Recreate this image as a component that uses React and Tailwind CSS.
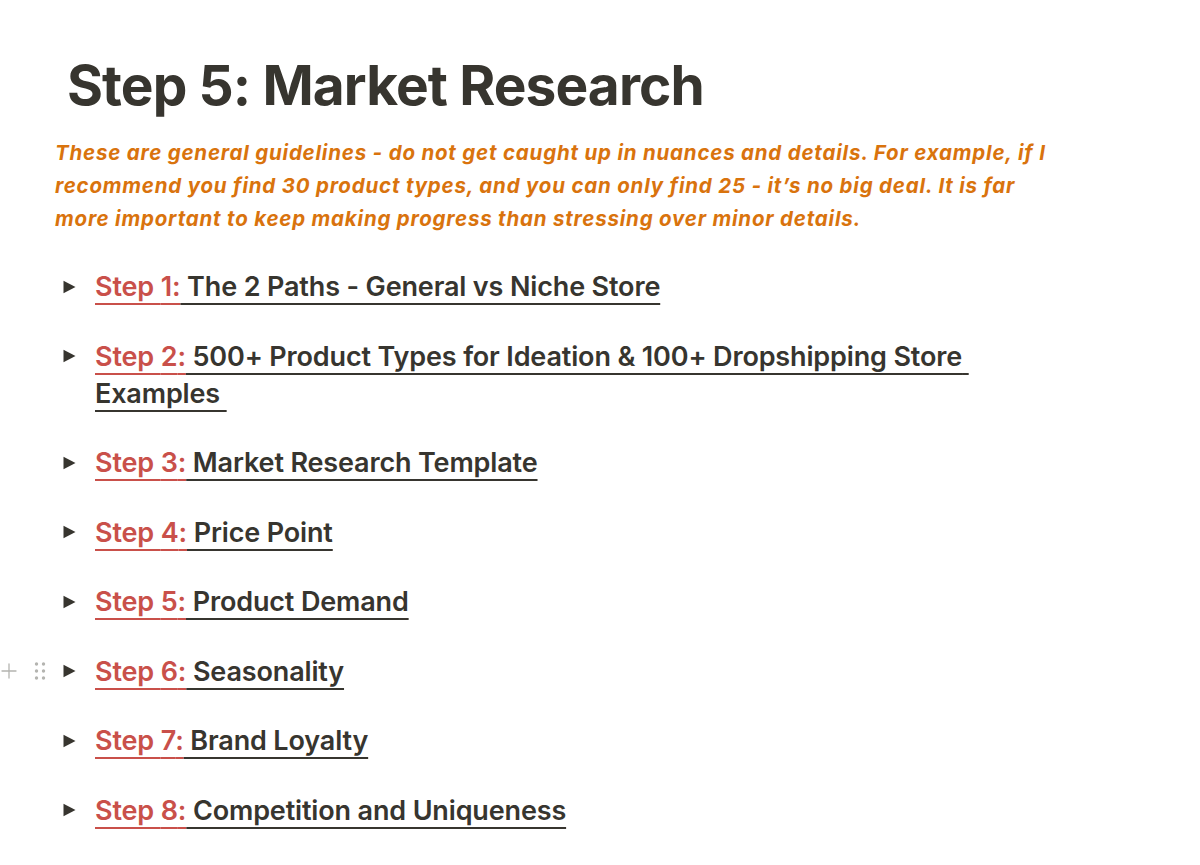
import { Plus } from "lucide-react";

const steps = [
  { n: 1, title: " The 2 Paths - General vs Niche Store" },
  { n: 2, title: " 500+ Product Types for Ideation & 100+ Dropshipping Store Examples " },
  { n: 3, title: " Market Research Template" },
  { n: 4, title: " Price Point" },
  { n: 5, title: " Product Demand" },
  { n: 6, title: " Seasonality", handle: true },
  { n: 7, title: " Brand Loyalty" },
  { n: 8, title: " Competition and Uniqueness" },
];

const Triangle = () => (
  <svg width="13" height="14" viewBox="0 0 13 14" className="fill-[#37352f]">
    <path d="M0.5 0.8 L12.5 7 L0.5 13.2 Z" />
  </svg>
);

const DragDots = () => (
  <svg width="12" height="20" viewBox="0 0 12 20" className="fill-[#b4b4b0]">
    <circle cx="2.5" cy="3" r="1.7" />
    <circle cx="9.5" cy="3" r="1.7" />
    <circle cx="2.5" cy="10" r="1.7" />
    <circle cx="9.5" cy="10" r="1.7" />
    <circle cx="2.5" cy="17" r="1.7" />
    <circle cx="9.5" cy="17" r="1.7" />
  </svg>
);

const ToggleItem = ({ step }) => (
  <div className="relative flex items-start">
    {step.handle && (
      <div className="absolute left-[-66px] top-[6px] flex items-center gap-[13px]">
        <Plus size={24} strokeWidth={1.3} className="text-[#b4b4b0]" />
        <DragDots />
      </div>
    )}
    <div className="w-[32px] h-[37px] flex items-center">
      <Triangle />
    </div>
    <a className="text-[27px] leading-[37px] font-semibold tracking-[-0.15px] text-[#37352f] max-w-[900px]">
      <span className="text-[#c9504a] underline decoration-[1.5px] underline-offset-[7px] decoration-[#c9504a]">
        Step {step.n}:
      </span>
      <span className="underline decoration-[1.5px] underline-offset-[7px] decoration-[#37352f] whitespace-pre-wrap">
        {step.title}
      </span>
    </a>
  </div>
);

const App = () => {
  return (
    <div className="min-h-[865px] bg-white font-['Inter',sans-serif] text-[#37352f] antialiased">
      <div className="pl-[63px] pt-[53px]">
        <h1 className="text-[55px] leading-[64px] font-bold tracking-[-0.9px] pl-[4px]">
          Step 5: Market Research
        </h1>
        <p className="mt-[19px] ml-[-8px] w-[1060px] text-[20.5px] leading-[33px] italic font-bold tracking-[0.8px] text-[#d9730d]">
          These are general guidelines - do not get caught up in nuances and details. For example, if I
          <br />
          recommend you find 30 product types, and you can only find 25 - it’s no big deal. It is far
          <br />
          more important to keep making progress than stressing over minor details.
        </p>
        <div className="mt-[33px] flex flex-col gap-[32.5px]">
          {steps.map((s) => (
            <ToggleItem key={s.n} step={s} />
          ))}
        </div>
      </div>
    </div>
  );
};

export default App;
